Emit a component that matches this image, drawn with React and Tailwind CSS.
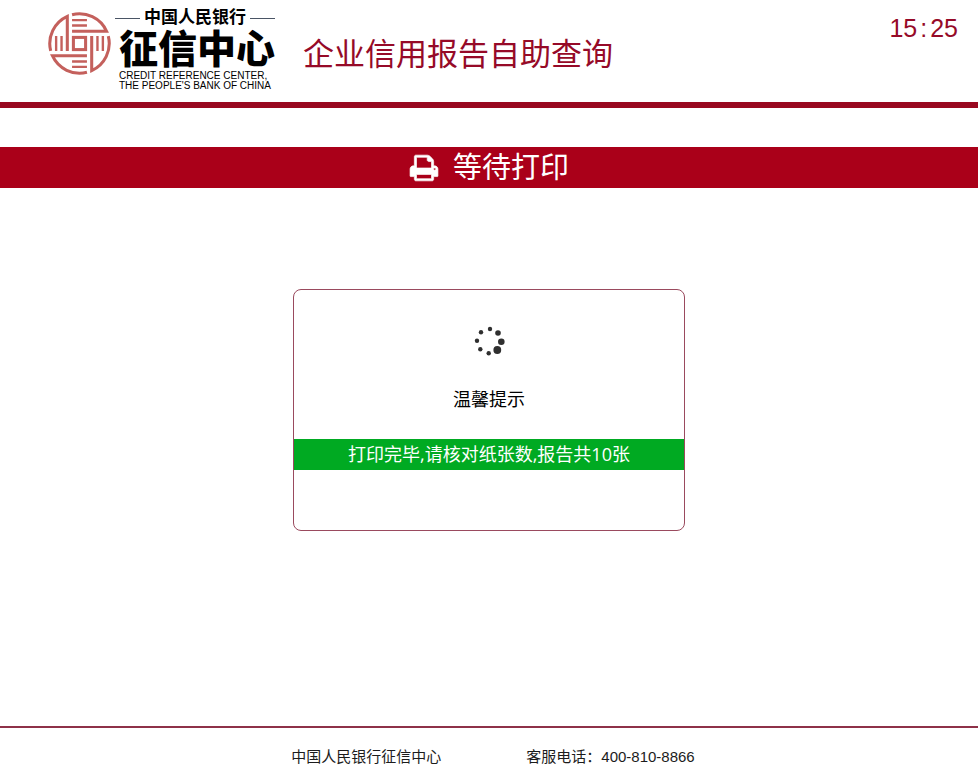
const DOTS = [
  { x: 17, y: 3, r: 2.2 },
  { x: 25, y: 7, r: 2.8 },
  { x: 28.3, y: 15.7, r: 3.3 },
  { x: 24.3, y: 24, r: 3.9 },
  { x: 15.7, y: 27.3, r: 2.2 },
  { x: 7.3, y: 23.3, r: 2.2 },
  { x: 4, y: 14.7, r: 2.2 },
  { x: 8, y: 6.3, r: 2.2 },
];

export default function App() {
  return (
    <div className="min-h-screen flex flex-col bg-white text-[#1c1c1c] font-['Liberation_Sans','Noto_Sans_CJK_SC',sans-serif]">
      <Header />

      {/* TITLE BAR */}
      <div className="mt-[39px] h-[41px] flex items-center justify-center gap-[14px] bg-[#aa0019] text-white">
        <PrintIcon />
        <h2 className="text-[29px] leading-10">等待打印</h2>
      </div>

      <main className="flex-1 flex flex-col items-center pt-[101px]">
        <StatusCard />
      </main>

      {/* FOOTER */}
      <footer className="h-14 flex items-center justify-center gap-[85px] border-t-2 border-[#8e3148] pt-1 pl-2 text-[15px]">
        <span>中国人民银行征信中心</span>
        <span>客服电话：400-810-8866</span>
      </footer>
    </div>
  );
}

function Header() {
  return (
    <header className="h-[108px] flex items-start border-b-6 border-[#990820] pl-12 pr-5">
      <Emblem />

      {/* LOGO TEXT */}
      <div className="ml-1 pt-2 text-black">
        <div className="flex items-center gap-1 text-[17px] leading-5 font-bold">
          <span className="h-px flex-1 bg-gray-600" />
          中国人民银行
          <span className="h-px flex-1 bg-gray-600" />
        </div>
        <div className="pl-1 text-[39px] leading-[43px] font-black">征信中心</div>
        <div className="pl-1 text-[10px] leading-[10px]">
          CREDIT REFERENCE CENTER,
          <br />
          THE PEOPLE'S BANK OF CHINA
        </div>
      </div>

      <h1 className="ml-7 pt-8 text-[31px] leading-[46px] text-[#960a28]">企业信用报告自助查询</h1>

      <time className="ml-auto pt-3 flex gap-[3px] text-[25px] leading-8 text-[#960a28]">
        <span>15</span>:<span>25</span>
      </time>
    </header>
  );
}

function StatusCard() {
  return (
    <section className="w-2/5 h-[242px] flex flex-col items-center rounded-lg border border-[#9a4a5e] pt-9">
      <Spinner />
      <p className="mt-7 text-lg text-black">温馨提示</p>
      <p className="mt-[25px] w-full bg-[#00aa22] text-center text-lg leading-[31px] text-white font-['Open_Sans','Noto_Sans_CJK_SC',sans-serif]">
        打印完毕,请核对纸张数,报告共10张
      </p>
    </section>
  );
}

function Spinner() {
  return (
    <svg className="size-8" viewBox="0 0 32 32" fill="#2f2f2f">
      {DOTS.map((dot) => (
        <circle key={`${dot.x}-${dot.y}`} cx={dot.x} cy={dot.y} r={dot.r} />
      ))}
    </svg>
  );
}

// one quarter of the coin, turned four times round the centre square
function Emblem() {
  return (
    <svg className="mt-3 size-[63px] shrink-0" viewBox="-93 -93 186 186" fill="none" stroke="#c4605c" strokeWidth="9">
      {[0, 90, 180, 270].map((angle) => (
        <g key={angle} transform={`rotate(${angle})`}>
          <path d="M-22-85A88 88 0 0 1 80-36H-22" />
          <path d="M-22-69H22M-22-53H22" strokeWidth="7" />
        </g>
      ))}
      <rect x="-18" y="-18" width="36" height="36" />
    </svg>
  );
}

function PrintIcon() {
  return (
    <svg className="size-[30px]" viewBox="0 0 1792 1792" fill="currentColor" stroke="currentColor" strokeWidth="40">
      <path d="M448 1536h896v-256h-896v256zm0-640h896v-384h-160q-40 0-68-28t-28-68v-160h-640v640zm1152 64q0-26-19-45t-45-19-45 19-19 45 19 45 45 19 45-19 19-45zm128 0v416q0 13-9.5 22.5t-22.5 9.5h-224v160q0 40-28 68t-68 28h-960q-40 0-68-28t-28-68v-160h-224q-13 0-22.5-9.5t-9.5-22.5v-416q0-79 56.5-135.5t135.5-56.5h64v-544q0-40 28-68t68-28h672q40 0 88 20t76 48l152 152q28 28 48 76t20 88v256h64q79 0 135.5 56.5t56.5 135.5z" />
    </svg>
  );
}
